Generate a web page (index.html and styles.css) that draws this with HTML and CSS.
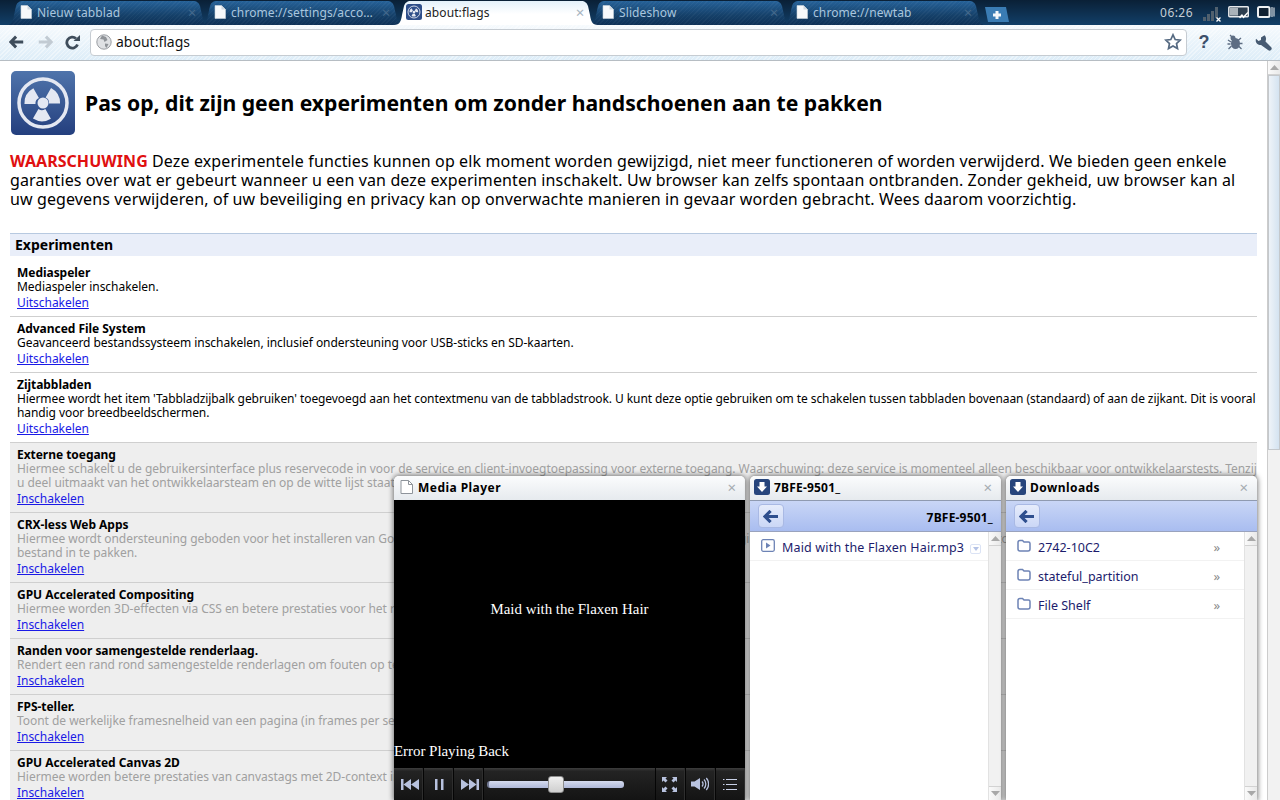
FILE: index.html
```html
<!DOCTYPE html>
<html lang="nl">
<head>
<meta charset="utf-8">
<title>about:flags</title>
<link rel="stylesheet" href="styles.css">
</head>
<body>
<svg class="defs" width="0" height="0">
  <defs>
    <symbol id="doc" viewBox="0 0 12 14"><path d="M1 .5h6.500l4 4v9H1z" fill="#f7f9fb" stroke="#c9d3dc" stroke-width=".6"/><path d="M7.500 .5v4h4" fill="#cfd8e0"/></symbol>
    <symbol id="doc-line" viewBox="0 0 13 14"><path d="M1 .5h7.500l4 4v9H1z" fill="#fff" stroke="#8e949b"/><path d="M8.500 .5v4h4" fill="none" stroke="#8e949b"/></symbol>
    <symbol id="rad" viewBox="0 0 64 64">
      <circle cx="32" cy="32" r="24" fill="none" stroke="#e4e8f2" stroke-width="3.500"/>
      <circle cx="32" cy="32" r="5.500" fill="#e4e8f2"/>
      <path d="M23 17.500a17 17 0 0 1 18 0l-5.600 9.500a6 6 0 0 0-6.800 0zM49.500 33a17 17 0 0 1-9 15.500l-5.500-9.500a6 6 0 0 0 3.400-6zM14.500 33a17 17 0 0 0 9 15.500l5.500-9.500a6 6 0 0 1-3.400-6z" fill="#e4e8f2" transform="rotate(60 32 32)"/>
    </symbol>
    <symbol id="dl" viewBox="0 0 16 16"><rect width="16" height="16" rx="2.500" fill="#27457c"/><path d="M5.500 3h5v4.500H13L8 13 3 7.500h2.500z" fill="#fff"/></symbol>
    <symbol id="folder" viewBox="0 0 14 13"><path d="M1 3.500Q1 1.500 3 1.500h2.500l1.500 1.500h4.500Q13 3 13 4.500v5.500Q13 12 11 12H3Q1 12 1 10z" fill="none" stroke="#6d83b5" stroke-width="1.500"/></symbol>
    <symbol id="back" viewBox="0 0 18 14"><path d="M8 1 2 7l6 6M2.500 7H16" fill="none" stroke="currentColor" stroke-width="3.400"/></symbol>
    <symbol id="sb-up" viewBox="0 0 9 5"><path d="M4.500 0 9 5H0z" fill="#a8a8a8"/></symbol>
    <symbol id="sb-down" viewBox="0 0 9 5"><path d="M0 0h9L4.500 5z" fill="#a8a8a8"/></symbol>
  </defs>
</svg>

<header class="tabstrip">
  <div class="tabs">
    <div class="tab"><svg class="tab-icon"><use href="#doc"/></svg><span class="tab-title">Nieuw tabblad</span><span class="tab-close">×</span></div>
    <div class="tab"><svg class="tab-icon"><use href="#doc"/></svg><span class="tab-title">chrome://settings/acco…</span><span class="tab-close">×</span></div>
    <div class="tab tab-active"><svg class="tab-icon tab-icon-rad" viewBox="0 0 16 16"><rect width="16" height="16" rx="2.500" fill="#2f4f8a"/><use href="#rad" width="16" height="16"/></svg><span class="tab-title">about:flags</span><span class="tab-close">×</span></div>
    <div class="tab"><svg class="tab-icon"><use href="#doc"/></svg><span class="tab-title">Slideshow</span><span class="tab-close">×</span></div>
    <div class="tab"><svg class="tab-icon"><use href="#doc"/></svg><span class="tab-title">chrome://newtab</span><span class="tab-close">×</span></div>
    <div class="new-tab"><svg width="10" height="10" viewBox="0 0 10 10"><path d="M5 1v8M1 5h8" stroke="#f2f6fa" stroke-width="3"/></svg></div>
  </div>
  <div class="status">
    <span class="clock">06:26</span>
    <svg class="st-net" width="20" height="17" viewBox="0 0 20 17"><path d="M1 11h3v4H1zM5 8h3v7H5zM9 5h3v10H9zM13 1h3v11h-3z" fill="#50606e"/><path d="M14.500 11.500l4 4m0-4-4 4" stroke="#fff" stroke-width="1.300"/></svg>
    <svg class="st-bat" width="21" height="15" viewBox="0 0 21 15"><rect x=".8" y="1.800" width="19.500" height="10" rx="1" fill="#2c3e4f" stroke="#e6e9ec" stroke-width="1.500"/><rect x="2" y="3" width="8" height="7.500" fill="#a9b2b9"/><path d="M11 12l3-3 1.500 2 4-4 .8 1-4.800 5.500-1.500-2-2 2z" fill="#fff"/></svg>
    <svg class="st-win" width="18" height="12" viewBox="0 0 18 12"><rect x="1" y="1" width="11.500" height="10" rx="1.500" fill="#123" stroke="#eef1f3" stroke-width="2"/><path d="M15 1v10M17 1.500v9" stroke="#cfd6dc" stroke-width="1.200"/></svg>
  </div>
</header>

<div class="toolbar">
  <button class="tb-btn"><svg width="16" height="14"><use href="#back"/></svg></button>
  <button class="tb-btn tb-disabled"><svg class="flip" width="16" height="14"><use href="#back"/></svg></button>
  <button class="tb-btn"><svg width="15" height="15" viewBox="0 0 15 15"><path d="M12.500 9.500A5.500 5.500 0 1 1 11 3.500" fill="none" stroke="currentColor" stroke-width="2.800"/><path d="M8.500 6H15V0z" fill="currentColor"/></svg></button>
  <div class="omnibox">
    <svg class="globe" width="16" height="16" viewBox="0 0 16 16"><circle cx="8" cy="8" r="7.200" fill="#dfe1e4" stroke="#9a9ea3"/><path d="M6 1.500 10 3l1.500 3-3 2-1-2.500L4 5zM9 9.500l3.500.5-2 4-1.500-2z" fill="#8f9398"/></svg>
    <span class="url">about:flags</span>
    <svg class="star" width="18" height="18" viewBox="0 0 18 18"><path d="M9 1.800l2.200 4.700 5 .6-3.700 3.400 1 5L9 13l-4.500 2.500 1-5L1.800 7.100l5-.6z" fill="#fff" stroke="#566a82" stroke-width="1.700"/></svg>
  </div>
  <span class="tb-help">?</span>
  <svg class="tb-bug" width="16" height="16" viewBox="0 0 16 16"><ellipse cx="8.500" cy="9.500" rx="4.500" ry="5.500" fill="#5d6d83"/><circle cx="6" cy="4" r="2.500" fill="#5d6d83"/><path d="M3 1l2 2M1 6l3 2M.5 10h3M1.500 15l3-3M14 4l-3 2.500M15.500 9.500h-3M14.500 15l-3-3" stroke="#5d6d83" stroke-width="1.300"/></svg>
  <svg class="tb-wrench" width="17" height="17" viewBox="0 0 17 17"><path d="M9.500 1.200 6 3.500V6L3.500 7 1 4.800C0 8 2 11 6 11l7 5a1.800 1.800 0 0 0 3-3l-5.500-5.500c1-3 .5-5-1-6.300z" fill="#465a72"/></svg>
</div>

<div class="viewport">
  <main class="page">
    <div class="title-row">
      <svg class="flag-logo" width="64" height="64" viewBox="0 0 64 64"><defs><linearGradient id="lg" x1="0" y1="0" x2="0" y2="1"><stop offset="0" stop-color="#4f74ab"/><stop offset="1" stop-color="#243f7e"/></linearGradient></defs><rect width="64" height="64" rx="5" fill="url(#lg)"/><use href="#rad"/></svg>
      <h1 class="page-title">Pas op, dit zijn geen experimenten om zonder handschoenen aan te pakken</h1>
    </div>
    <p class="warning"><span class="warning-label">WAARSCHUWING</span> Deze experimentele functies kunnen op elk moment worden gewijzigd, niet meer functioneren of worden verwijderd. We bieden geen enkele garanties over wat er gebeurt wanneer u een van deze experimenten inschakelt. Uw browser kan zelfs spontaan ontbranden. Zonder gekheid, uw browser kan al uw gegevens verwijderen, of uw beveiliging en privacy kan op onverwachte manieren in gevaar worden gebracht. Wees daarom voorzichtig.</p>
    <h2 class="section-head">Experimenten</h2>
    <div class="exp">
      <div class="exp-name">Mediaspeler</div>
      <div class="exp-desc">Mediaspeler inschakelen.</div>
      <a class="exp-link" href="#">Uitschakelen</a>
    </div>
    <div class="exp">
      <div class="exp-name">Advanced File System</div>
      <div class="exp-desc">Geavanceerd bestandssysteem inschakelen, inclusief ondersteuning voor USB-sticks en SD-kaarten.</div>
      <a class="exp-link" href="#">Uitschakelen</a>
    </div>
    <div class="exp">
      <div class="exp-name">Zijtabbladen</div>
      <div class="exp-desc exp-desc-tight">Hiermee wordt het item 'Tabbladzijbalk gebruiken' toegevoegd aan het contextmenu van de tabbladstrook. U kunt deze optie gebruiken om te schakelen tussen tabbladen bovenaan (standaard) of aan de zijkant. Dit is vooral handig voor breedbeeldschermen.</div>
      <a class="exp-link" href="#">Uitschakelen</a>
    </div>
    <div class="exp exp-off">
      <div class="exp-name">Externe toegang</div>
      <div class="exp-desc">Hiermee schakelt u de gebruikersinterface plus reservecode in voor de service en client-invoegtoepassing voor externe toegang. Waarschuwing: deze service is momenteel alleen beschikbaar voor ontwikkelaarstests. Tenzij u deel uitmaakt van het ontwikkelaarsteam en op de witte lijst staat, werkt deze functie niet in uw interface.</div>
      <a class="exp-link" href="#">Inschakelen</a>
    </div>
    <div class="exp exp-off">
      <div class="exp-name">CRX-less Web Apps</div>
      <div class="exp-desc">Hiermee wordt ondersteuning geboden voor het installeren van Google Chrome-apps vanuit een manifestbestand op een webpagina, in plaats van door het manifest en de pictogrammen in een crx-<br>bestand in te pakken.</div>
      <a class="exp-link" href="#">Inschakelen</a>
    </div>
    <div class="exp exp-off">
      <div class="exp-name">GPU Accelerated Compositing</div>
      <div class="exp-desc">Hiermee worden 3D-effecten via CSS en betere prestaties voor het renderen van pagina's ingeschakeld.</div>
      <a class="exp-link" href="#">Inschakelen</a>
    </div>
    <div class="exp exp-off">
      <div class="exp-name">Randen voor samengestelde renderlaag.</div>
      <div class="exp-desc">Rendert een rand rond samengestelde renderlagen om fouten op te sporen.</div>
      <a class="exp-link" href="#">Inschakelen</a>
    </div>
    <div class="exp exp-off">
      <div class="exp-name">FPS-teller.</div>
      <div class="exp-desc">Toont de werkelijke framesnelheid van een pagina (in frames per seconde).</div>
      <a class="exp-link" href="#">Inschakelen</a>
    </div>
    <div class="exp exp-off">
      <div class="exp-name">GPU Accelerated Canvas 2D</div>
      <div class="exp-desc">Hiermee worden betere prestaties van canvastags met 2D-context ingeschakeld.</div>
      <a class="exp-link" href="#">Inschakelen</a>
    </div>
  </main>
  <div class="scrollbar page-scroll">
    <div class="sb-btn"><svg width="9" height="5"><use href="#sb-up"/></svg></div>
    <div class="sb-thumb"></div>
  </div>

  <section class="panel player">
    <div class="panel-head"><svg class="panel-icon panel-icon-doc"><use href="#doc-line"/></svg><span class="panel-title">Media Player</span><span class="panel-close">×</span></div>
    <div class="video">
      <div class="video-title">Maid with the Flaxen Hair</div>
      <div class="video-error">Error Playing Back</div>
    </div>
    <div class="controls">
      <span class="ctl ctl-s"><svg width="18" height="11" viewBox="0 0 18 11"><path d="M0 0h2.500v11H0zM10 0v11L2.500 5.500zM18 0v11l-8-5.500z" fill="#b8c2df"/></svg></span>
      <span class="ctl ctl-s"><svg width="9" height="11" viewBox="0 0 9 11"><path d="M0 0h2.500v11H0zM6 0h2.500v11H6z" fill="#b8c2df"/></svg></span>
      <span class="ctl ctl-s"><svg width="18" height="11" viewBox="0 0 18 11"><path d="M18 0h-2.500v11H18zM8 0v11l7.500-5.500zM0 0v11l8-5.500z" fill="#b8c2df"/></svg></span>
      <div class="seek"><div class="seek-track"><div class="seek-thumb"></div></div></div>
      <span class="ctl ctl-l"><svg width="15" height="15" viewBox="0 0 15 15"><path d="M0 0h5L3.500 1.500 5.500 3.500 3.500 5.500 1.500 3.500 0 5zM15 0v5l-1.500-1.500-2 2-2-2 2-2L10 0zM0 15v-5l1.500 1.500 2-2 2 2-2 2L5 15zM15 15h-5l1.500-1.500-2-2 2-2 2 2L15 10z" fill="#b8c2df"/></svg></span>
      <span class="ctl ctl-l"><svg width="18" height="14" viewBox="0 0 18 14"><path d="M0 4.500h3.500L9 1v12L3.500 9.500H0z" fill="#b8c2df"/><path d="M11 4.500a3.500 3.500 0 0 1 0 5M13 2.500a6.500 6.500 0 0 1 0 9M15.300 1a9 9 0 0 1 0 12" fill="none" stroke="#b8c2df" stroke-width="1.300"/></svg></span>
      <span class="ctl ctl-l ctl-menu"><svg width="14" height="11" viewBox="0 0 14 11"><path d="M0 .5h1.500M0 5.500h1.500M0 10.500h1.500M3 .5h11M3 5.500h11M3 10.500h11" stroke="#c8d0e6" stroke-width="1"/></svg></span>
    </div>
  </section>

  <section class="panel files">
    <div class="panel-head"><svg class="panel-icon"><use href="#dl"/></svg><span class="panel-title panel-title-tight">7BFE-9501_</span><span class="panel-close">×</span></div>
    <div class="file-bar"><button class="file-back"><svg width="17" height="13"><use href="#back"/></svg></button><span class="file-path">7BFE-9501_</span></div>
    <div class="file-body">
      <ul class="file-list">
        <li class="file-row"><svg class="file-icon" width="14" height="13" viewBox="0 0 14 13"><rect x=".7" y=".7" width="12.600" height="11.600" rx="1.500" fill="none" stroke="#6d83b5" stroke-width="1.300"/><path d="M5 3.500v6l4.500-3z" fill="#6d83b5"/></svg><span class="file-name file-name-wide">Maid with the Flaxen Hair.mp3</span><span class="file-menu"><svg width="6" height="4" viewBox="0 0 6 4"><path d="M0 0h6L3 4z" fill="#b5c3e6"/></svg></span></li>
      </ul>
      <div class="scrollbar panel-scroll"><div class="sb-btn"><svg width="9" height="5"><use href="#sb-up"/></svg></div><div class="sb-fill"></div><div class="sb-btn sb-btn-down"><svg width="9" height="5"><use href="#sb-down"/></svg></div></div>
    </div>
  </section>

  <section class="panel downloads">
    <div class="panel-head"><svg class="panel-icon"><use href="#dl"/></svg><span class="panel-title">Downloads</span><span class="panel-close">×</span></div>
    <div class="file-bar"><button class="file-back"><svg width="17" height="13"><use href="#back"/></svg></button></div>
    <div class="file-body">
      <ul class="file-list">
        <li class="file-row"><svg class="file-icon" width="14" height="13"><use href="#folder"/></svg><span class="file-name">2742-10C2</span><span class="file-more">»</span></li>
        <li class="file-row"><svg class="file-icon" width="14" height="13"><use href="#folder"/></svg><span class="file-name">stateful_partition</span><span class="file-more">»</span></li>
        <li class="file-row"><svg class="file-icon" width="14" height="13"><use href="#folder"/></svg><span class="file-name">File Shelf</span><span class="file-more">»</span></li>
      </ul>
      <div class="scrollbar panel-scroll"><div class="sb-btn"><svg width="9" height="5"><use href="#sb-up"/></svg></div><div class="sb-fill"></div><div class="sb-btn sb-btn-down"><svg width="9" height="5"><use href="#sb-down"/></svg></div></div>
    </div>
  </section>
</div>
</body>
</html>
```
FILE: styles.css
```css
* { box-sizing: border-box; }
html, body { margin: 0; height: 100%; overflow: hidden; }
body { width: 1280px; height: 800px; display: flex; flex-direction: column; font-family: "Noto Sans", "Open Sans", sans-serif; color: #000; background: #fff; }
.defs { position: absolute; }
svg { display: block; }

.tabstrip { height: 25px; flex: none; display: flex; justify-content: space-between; background: linear-gradient(#0a2036, #123f68); }
.tabs { display: flex; padding: 1px 0 0 6px; }
.tab { width: 204px; height: 24px; margin-right: -10px; display: flex; align-items: center; padding: 0 12px 2px 14px; color: #a9c6de; font-size: 12px;
  background: repeating-linear-gradient(135deg, rgba(255,255,255,.035) 0 1px, rgba(255,255,255,0) 1px 3px), linear-gradient(#266299, #154069 60%, #0e3157);
  clip-path: path("M0 24C6 24 7 20 8 14L10 5C11 2 13 0 17 0H187C191 0 193 2 194 5L196 14C197 20 198 24 204 24Z"); }
.tab-active { position: relative; z-index: 1; color: #222; background: linear-gradient(#e4f1fa, #fff 55%); }
.tab-icon { width: 12px; height: 14px; flex: none; margin-right: 5px; }
.tab-icon-rad { width: 16px; height: 16px; margin-left: -2px; margin-right: 3px; }
.tab-title { flex: 1; white-space: nowrap; overflow: hidden; letter-spacing: .1px; }
.tab-close { color: #44698c; font-size: 15px; line-height: 1; width: 12px; text-align: center; }
.tab-active .tab-close { color: #a6b4c0; }
.new-tab { width: 24px; height: 15px; margin: 6px 0 0 9px; display: flex; align-items: center; justify-content: center; background: #3a7cb4; clip-path: polygon(0 0, 21px 0, 100% 100%, 3px 100%); }

.status { display: flex; align-items: center; padding-bottom: 1px; }
.clock { color: #c5ced6; font-size: 12px; margin-right: 9px; letter-spacing: .45px; }
.st-net { margin: 4px 6px 0 0; }
.st-bat { margin-right: 8px; }
.st-win { margin-right: 5px; }

.toolbar { height: 36px; flex: none; display: flex; align-items: center; padding: 0 3px 1px 8px; border-bottom: 1px solid #b6bdc3; background: repeating-linear-gradient(135deg, rgba(255,255,255,.4) 0 1px, rgba(255,255,255,0) 1px 3px), linear-gradient(#f6fafd, #ddedf8); }
.tb-btn { width: 28px; height: 24px; padding: 0 0 0 1px; margin: 0; border: 0; background: none; display: flex; align-items: center; color: #3f4d5b; }
.tb-disabled { color: #c2cbd3; }
.flip { transform: scaleX(-1); }
.omnibox { width: 1097px; height: 27px; margin-left: -2px; flex: none; display: flex; align-items: center; padding: 0 4px 0 5px; background: #fff; border: 1px solid #c6ccd2; border-radius: 4px; }
.globe { margin-right: 4px; }
.url { flex: 1; font-size: 14px; color: #111; padding-bottom: 2px; }
.tb-help { width: 14px; margin-left: 10px; text-align: center; font: bold 18px/1 "Liberation Sans", sans-serif; color: #3c4f6a; }
.tb-bug { margin-left: 16px; }
.tb-wrench { margin-left: 12px; }

.viewport { flex: 1; position: relative; display: flex; overflow: hidden; }
.page { width: 1267px; height: 739px; flex: none; padding: 10px 10px 0; overflow: hidden; }
.title-row { display: flex; align-items: center; gap: 10px; margin-left: 1px; }
.flag-logo { flex: none; }
.page-title { margin: 0; font-size: 21.160px; line-height: 28px; font-weight: 700; }
.warning { margin: 17px 0 0; font-size: 16px; line-height: 19px; letter-spacing: .115px; }
.warning-label { color: #e01010; font-weight: 700; letter-spacing: .05px; }
.section-head { margin: 24px 0 0; height: 23px; padding: 1px 5px 0; border-top: 1px solid #b7c9e0; font-size: 14px; line-height: 19px; font-weight: 700; background: #e9eef9; }
.exp { padding: 5px 0 6px 7px; border-bottom: 1px solid #cfcfcf; font-size: 12px; line-height: 14px; letter-spacing: -.04px; }
.section-head + .exp { padding-top: 10px; }
.exp-name { font-weight: 700; }
.exp-desc-tight { letter-spacing: -.085px; }
.exp-link { display: block; margin-top: 2px; color: #1a1ae6; }
.exp-off { background: #eeeeee; }
.exp-off .exp-desc { color: #a0a0a0; }

.scrollbar { display: flex; flex-direction: column; background: #f2f2f2; }
.page-scroll { width: 13px; flex: none; border-left: 1px solid #cccccc; }
.sb-btn { height: 14px; flex: none; display: flex; align-items: center; justify-content: center; background: linear-gradient(90deg, #fafafa, #e9e9e9); border-bottom: 1px solid #d2d2d2; }
.sb-btn-down { border-bottom: 0; border-top: 1px solid #d2d2d2; }
.sb-thumb { height: 375px; background: linear-gradient(90deg, #eef3f8, #d4e3f1); border: 1px solid #c4c8cc; }
.sb-fill { flex: 1; background: #f1f1f1; }

.panel { position: absolute; top: 415px; height: 324px; display: flex; flex-direction: column; background: #fff; border-radius: 5px 5px 0 0; box-shadow: 0 0 5px 1px rgba(40,40,40,.6); }
.player { left: 394px; width: 351px; }
.files { left: 750px; width: 251px; }
.downloads { left: 1006px; width: 251px; }
.panel-head { height: 24px; flex: none; display: flex; align-items: center; padding: 0 9px 2px 4px; border-radius: 5px 5px 0 0; background: linear-gradient(#fbfcfd, #e6eaee); }
.panel-icon { width: 16px; height: 16px; flex: none; margin-right: 4px; }
.panel-icon-doc { width: 13px; height: 14px; margin: 0 5px 0 2px; }
.panel-title { flex: 1; font-size: 12px; font-weight: 700; letter-spacing: .45px; white-space: nowrap; }
.panel-title-tight { letter-spacing: .2px; }
.panel-close { color: #a5abb1; font-size: 15px; line-height: 1; }

.video { flex: 1; position: relative; background: #000; color: #fff; font-family: "Liberation Serif", serif; font-size: 14.900px; }
.video-title { padding-top: 101px; text-align: center; }
.video-error { position: absolute; left: 0; bottom: 8px; font-size: 15px; letter-spacing: -.05px; }
.controls { height: 32px; flex: none; display: flex; align-items: center; background: linear-gradient(#3e3e3e, #232323 10%, #141414); }
.ctl { height: 100%; display: flex; align-items: center; justify-content: center; border-right: 1px solid #050505; box-shadow: inset -1px 0 0 #2e2e2e; }
.ctl-s { width: 30px; padding-left: 2px; }
.ctl-l { width: 30px; border-right: 0; border-left: 1px solid #050505; padding-right: 2px; }
.ctl-menu { padding-right: 1px; }
.seek { flex: 1; padding: 0 30px 0 3px; height: 100%; display: flex; align-items: center; }
.seek-track { width: 137px; height: 7px; position: relative; border-radius: 3px; border-left: 2px solid #6f7690; background: linear-gradient(#d5dbee, #aeb8d8); }
.seek-thumb { position: absolute; left: 59px; top: -5px; width: 16px; height: 17px; border-radius: 3px; background: linear-gradient(#eeeeee, #cfcfcf); border: 1px solid #8d8d8d; }

.file-bar { height: 32px; flex: none; display: flex; align-items: center; justify-content: space-between; padding: 0 8px; border-top: 1px solid #8f9ab0; border-bottom: 1px solid #9aa3bd; background: linear-gradient(#c9d6f6, #a9bdf0); }
.file-back { width: 26px; height: 24px; padding: 0; display: flex; align-items: center; justify-content: center; color: #2f4f8e; border: 1px solid #a9b9e4; border-radius: 4px; background: linear-gradient(#e6ecfb, #cbd7f6); }
.file-path { font-size: 12px; font-weight: 700; letter-spacing: .2px; padding-top: 2px; }
.file-body { flex: 1; min-height: 0; display: flex; }
.file-list { flex: 1; margin: 0; padding: 0; list-style: none; }
.file-row { height: 29px; display: flex; align-items: center; padding: 2px 10px 0 11px; border-bottom: 1px solid #f2f2f2; }
.file-icon { flex: none; margin: -3px 7px 0 0; }
.file-name { flex: 1; font-size: 12.500px; color: #1c1c6c; white-space: nowrap; }
.file-name-wide { letter-spacing: .17px; }
.file-more { color: #8a8a8a; font-size: 13px; margin-right: 14px; }
.file-menu { width: 11px; height: 10px; margin: 4px -3px 0 0; display: flex; align-items: center; justify-content: center; border: 1px solid #dbe3f5; border-radius: 2px; }
.panel-scroll { width: 13px; flex: none; border-left: 1px solid #e2e2e2; }
```
